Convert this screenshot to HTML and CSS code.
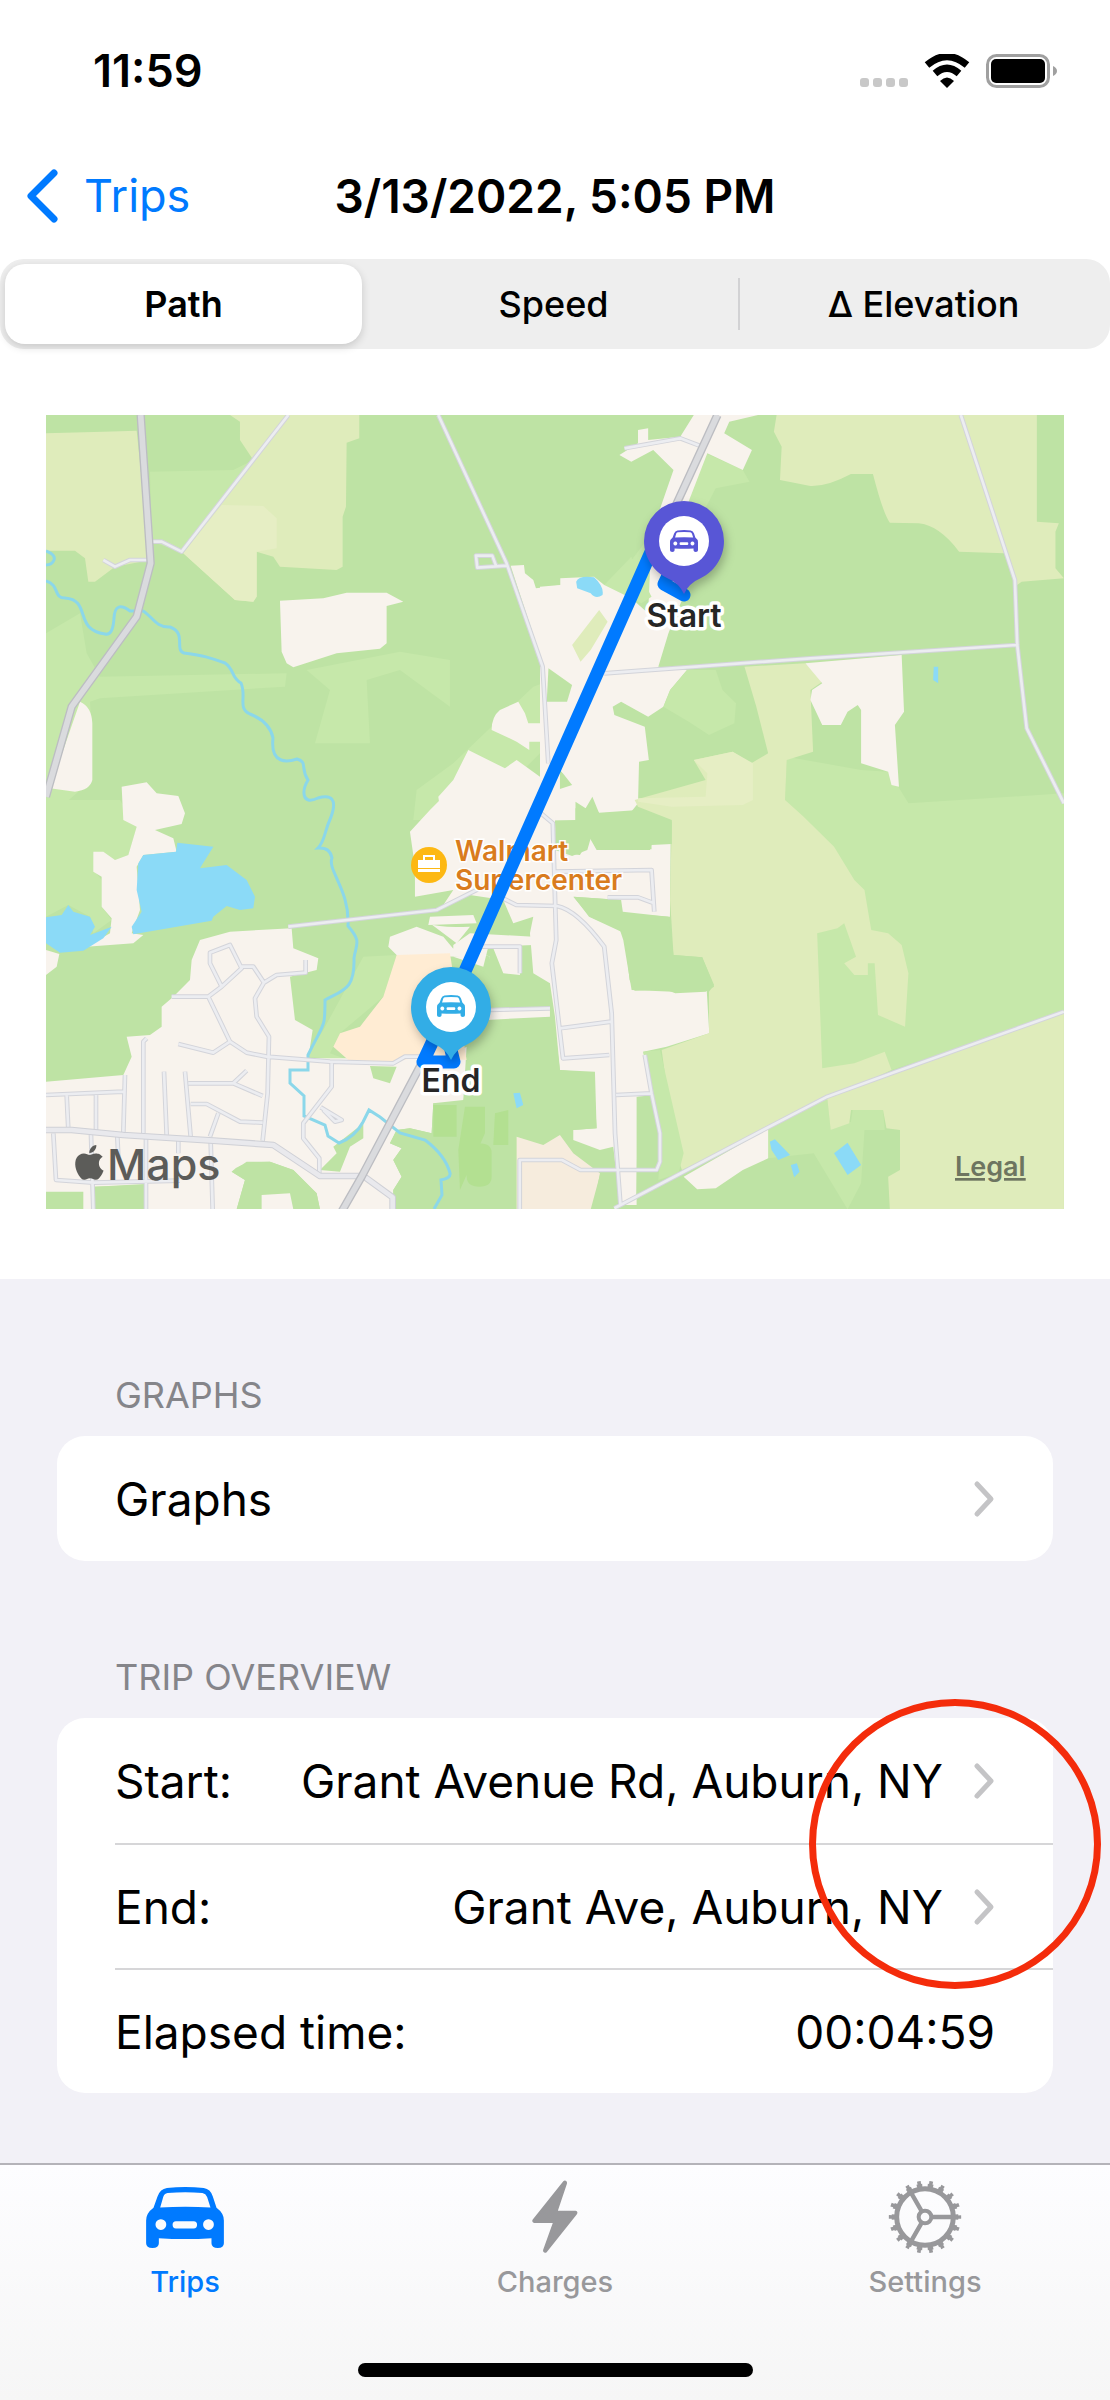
FILE: index.html
```html
<!DOCTYPE html>
<html lang="en">
<head>
<meta charset="utf-8">
<meta name="viewport" content="width=device-width, initial-scale=1">
<title>Trip details</title>
<link rel="stylesheet" href="styles.css">
</head>
<body>
<svg class="sprite" aria-hidden="true">
  <symbol id="car" viewBox="48 50 232 182">
    <path fill-rule="evenodd" d="M110 53Q165 47 220 53 240 56 247 78L258 112Q280 128 280 150V218Q280 232 262 232 243 232 243 218V203Q165 208 86 203V218Q86 232 67 232 48 232 48 218V150Q48 128 70 112L82 78Q90 56 110 53ZM112 68Q102 70 99 80L90 111Q165 107 240 111L230 80Q226 70 216 68 165 63 112 68ZM92 146a16 16 0 1 0 .1 0ZM234 146a16 16 0 1 0 .1 0ZM137 152a10 11 0 0 0 0 22H190a10 11 0 0 0 0-22Z"/>
  </symbol>
  <symbol id="chevron" viewBox="0 0 22 38">
    <path d="M4 4L18 19 4 34" fill="none" stroke="currentColor" stroke-width="5" stroke-linecap="round" stroke-linejoin="round"/>
  </symbol>
</svg>

<div class="screen">
  <header class="top">
    <div class="status">
      <time class="clock">11:59</time>
      <div class="status-icons">
        <svg class="signal" viewBox="0 0 50 10" fill="#c8c8c8"><rect width="9" height="9" rx="3"/><rect x="13" width="9" height="9" rx="3"/><rect x="26" width="9" height="9" rx="3"/><rect x="39" width="9" height="9" rx="3"/></svg>
        <svg class="wifi" viewBox="0 0 46 34"><path d="M3 11Q23-6 43 11" fill="none" stroke="#000" stroke-width="7"/><path d="M11 19.500Q23 9 35 19.500" fill="none" stroke="#000" stroke-width="7"/><path d="M16 27Q23 20 30 27L23 34Z"/></svg>
        <svg class="battery" viewBox="0 0 72 34"><rect x="1.500" y="1.500" width="61" height="31" rx="9" fill="none" stroke="#a0a0a0" stroke-width="3"/><rect x="5" y="5" width="54" height="24" rx="5"/><path d="M67 12Q71 14 71 17T67 22Z" fill="#a0a0a0"/></svg>
      </div>
    </div>
    <nav class="navbar">
      <a class="back" href="#trips">
        <svg class="back-icon" viewBox="0 0 32 54"><path d="M28 4L5 27 28 50" fill="none" stroke="currentColor" stroke-width="7" stroke-linecap="round" stroke-linejoin="round"/></svg>
        Trips
      </a>
      <h1 class="title">3/13/2022, 5:05 PM</h1>
    </nav>
    <div class="segments" role="group" aria-label="Map view">
      <button class="segment selected" type="button" aria-pressed="true">Path</button>
      <button class="segment" type="button" aria-pressed="false">Speed</button>
      <button class="segment divided" type="button" aria-pressed="false">Δ Elevation</button>
    </div>
  </header>

  <div class="map-area">
    <svg class="map" viewBox="46 415 1018 794" aria-label="Trip path map">
      <defs>
        <g id="highways">
          <g transform="translate(40 400) scale(.3333)"><path d="M302 45L332 490 290 650 95 920 18 1190"/></g>
          <g transform="translate(540 400) scale(.338 .3333)"><path d="M525 45L400 320 330 460"/></g>
          <g transform="translate(40 800) scale(.3333)"><path d="M1145 790L965 1130 905 1235"/></g>
        </g>
        <g id="avenues">
          <g transform="translate(40 800) scale(.3333)"><path d="M18 990L95 990 250 1005 520 1022 700 1035 840 1128H970L1058 1192V1235"/></g>
        </g>
        <g id="streets">
          <g transform="translate(40 400) scale(.3333)"><path d="M745 45L425 455 365 425H335M190 480L225 500 270 480H325M1195 45L1400 490 1508 800 1525 1090M1400 497L1312 503 1308 467H1357L1368 497"/></g>
          <g transform="translate(540 400) scale(.338 .3333)"><path d="M250 145L415 115 480 140M1245 45L1405 540 1412 735 1440 985 1550 1210M1410 735L800 775 190 820"/></g>
          <g transform="translate(40 800) scale(.3333)"><path d="M745 380L1190 330 1330 260M395 590H505L545 560 605 505 570 435 510 458V490L545 560M605 500H640L672 548 645 595 650 650 687 710 683 880 668 1022M672 548L710 525 797 518V480M505 590L570 725 520 758 415 732M570 725L620 758 680 770 870 785 1060 790 1095 770H1140M875 785V860L790 970V1015L838 1075V1125M842 922L905 960 885 965 850 930M445 850H580L668 888M580 850L620 812M452 912H500L600 965 668 968M535 940L510 1010M435 815L452 1010M372 815L380 1005M320 715L310 725V1000M18 885L250 875M255 825L250 1000M80 885L85 990M168 885V990M40 1000L48 1140 160 1148 420 1142M153 1005L160 1228M232 1010L235 1070M318 1015V1228M415 1022V1060M512 1022L518 1228"/></g>
          <g transform="translate(540 800) scale(.338 .3333)"><path d="M-20 20L38 70 48 420 35 490 68 775 205 765M-140 280L-70 315 50 318Q110 330 190 440L212 640 222 1000 238 1215M60 685L210 665M225 885L330 880 355 1000V1085L345 1110H120L65 1080H-60V1230M310 765L330 880M45 215L330 210 338 335M200 292H290L338 310M220 1225L660 990 850 890 1040 820 1550 635"/></g>
          <g transform="translate(40 800) scale(.3333)"><path d="M1350 630L1530 625M1290 440H1440V520"/></g>
        </g>
      </defs>

      <rect class="wood" x="46" y="415" width="1018" height="794"/>

      <!-- north-west -->
      <g transform="translate(40 400) scale(.3333)">
        <path class="grass" d="M330 215L580 210 640 180 540 310 425 455 335 425ZM18 700L120 640 140 760 180 830 740 820 735 860 180 895 150 905Q155 960 155 1140L18 1260ZM800 810L1080 755 1230 780V920L1080 810 980 840 990 1030 825 1030 870 870ZM1560 830L1480 860 1240 1090 1130 1170 1120 1260H1300L1560 1000Z"/>
        <path class="field" d="M18 100L190 95 290 92 330 480 225 500 165 545H145L135 475 105 452H18ZM570 45H958V115L920 128 918 320 908 350V500L890 510 720 500 700 470 650 455V590L640 605 585 600 430 460 640 180 600 120V65Z"/>
        <path class="field-light" d="M545 315L670 318 710 355V445L650 455V590L640 605 585 600 430 460Z"/>
        <path class="land" d="M720 602L850 595 920 578H1040L1090 605 1040 618V730L1020 746 890 760 760 802 740 790 725 755ZM120 905Q155 920 157 970V1140Q150 1170 105 1175L30 1165ZM1412 497L1452 495 1455 520 1480 540 1488 565 1570 555V830L1510 795ZM1435 905L1455 940 1465 970 1510 970V1025H1468V1050L1430 1025 1355 990Q1355 950 1380 930ZM1520 908H1570V1120L1530 1080ZM1285 1050L1395 1105 1430 1080 1500 1130 1560 1100V1260H1150L1200 1225 1195 1190 1240 1140Z"/>
      </g>

      <!-- north-east -->
      <g transform="translate(540 400) scale(.338 .3333)">
        <path class="grass" d="M490 160L600 210 620 245 520 265 440 420 400 330ZM330 400L220 550 330 580Z"/>
        <path class="land" d="M455 45H645L560 65 545 100 627 150 600 210 495 160 430 330 420 600 380 700 350 800 435 810 385 870 365 920 320 950 240 905 215 920 220 945 310 980 322 1080 293 1085 290 1210 270 1235 175 1240 155 1190 135 1225 105 1205 105 1262H45L50 1170 95 1155 60 1110 0 1180V560L60 555 60 535 160 530 190 555 220 550 320 640 330 400 395 210 335 150 270 185 235 165 290 130V90L320 85V120L415 110Z"/>
        <path class="grass" d="M190 555L270 470 330 590 300 610ZM435 810L520 810 540 870 580 910 575 970 500 1005 440 965 365 920 385 870Z"/>
        <path class="wood" d="M25 805L95 855 80 905 20 905Z"/>
        <path class="field" d="M175 630L200 665 150 750 120 785 95 735ZM700 45H1470V365L1535 370 1525 395V505L1550 535 1425 545 1405 560 1375 460 1240 455Q1180 375 1120 370L1035 368Q1015 340 985 222H920Q850 260 800 258L710 240 715 140 692 95Z"/>
        <path class="water" d="M107 545Q115 525 160 532 190 560 185 585 165 600 150 580L110 565ZM1165 800H1178V850L1163 840Z"/>
      </g>

      <!-- south-west -->
      <g transform="translate(40 800) scale(.3333)">
        <path class="grass" d="M18 0H240L290 80 265 165 225 180 160 155 165 215 185 240V320L215 360 160 400 150 350 85 315 18 350ZM800 770L850 690 970 470 1070 465 1030 590 900 700 870 760 925 780Z"/>
        <path class="land" d="M245-40L320-53 350-20 415-12 435 40 425 72 345 90 400 115 410 155 310 165 290 200 300 330 275 400 310 405 280 430 140 440 210 400 215 355 185 320V230L160 215V155L190 155 225 180 265 165 290 80 250 60ZM18 450L58 462 50 500 18 525ZM1110 95L1170 30 1200 0H1560L1545 65 1560 160 1620 165 1650 115 1670 150 1830 150 1835 132 1892 132 1890 350 1740 340V300L1600 290 1650 350 1740 390 1750 420 1775 570 1900 575 2000 565 2008 700 1880 740 1810 755 1840 890 1790 890V1215H1740L1720 1040 1680 1050 1600 1020V990L1670 985 1665 815 1560 810 1545 650 1530 550 1400 540 1340 520 1350 470 1250 430 1170 370 1200 330 1240 270 1125 290V200Z"/>
        <path class="land" d="M480 420L570 395 755 385 760 445 835 475 830 510 750 530 765 660 818 690 805 775H1140L1170 800 1280 740 1270 900 1180 910 1175 1000 1110 985 1070 990 1050 1030 1085 1045 1060 1080 1085 1130 1060 1170V1228H840L830 1180 760 1110 690 1085 620 1085 575 1115 615 1140 590 1228H320V1155L160 1160 165 1228H130V1175H18V845L250 825 275 770 260 710 330 705 365 680V620L400 590 450 540 455 480Z"/>
        <path class="wood" d="M1180 330L1290 285 1390 300 1420 370 1480 350 1470 400 1480 520 1530 550V620L1350 650 1330 520 1350 470 1250 430 1290 380Q1200 385 1165 370ZM1180 910H1270L1290 740 1340 700 1350 650H1540L1560 810 1660 820 1670 985 1600 990 1510 1035 1430 1010V1228H1060V1170L1085 1130 1060 1080 1085 1045 1050 1030 1070 990 1110 985 1175 1000ZM840 1110L890 1060 880 1040 970 970V1015L930 1040 900 1115ZM990 798L1070 800 1050 850 1000 835ZM165 1160L315 1152V1228H165ZM18 1178H128V1228H18ZM590 1228L615 1140 575 1115Q600 1085 690 1085L760 1110 830 1180 840 1228Z"/>
        <path class="land" d="M1050 410L1130 380 1210 410 1260 470 1070 465 1045 440ZM1170 350L1300 345 1310 370 1165 375ZM1240 435L1290 400 1480 410 1480 435 1345 440 1330 500 1240 470ZM1360 445H1440V525L1390 520ZM1340 635L1530 620V650L1340 660ZM665 1185L750 1180 760 1228H665Z"/>
        <path class="school" d="M1070 465L1230 460 1280 780 1140 770 1060 785 925 780 880 740 900 700 960 680 1030 590Z"/>
        <path class="sand" d="M1430 1010L1510 1035 1560 1005 1600 1060 1680 1120 1660 1228H1430Z"/>
        <path class="park" d="M1180 915H1250V1010H1180ZM1275 920H1335V1000L1260 1170 1255 1050ZM1365 940L1405 930V1035H1360ZM1280 1055Q1280 1030 1318 1030T1355 1060V1130Q1355 1160 1318 1160T1280 1130Z"/>
        <path class="water" d="M310 165L408 155 412 128 520 140 480 205 560 195 620 240 645 290 640 325 600 330 560 318 520 350 515 362 280 403 275 380 305 335 290 270 295 190ZM18 352L65 345 85 315 100 335 150 350 165 380 150 405 215 380 190 415 130 452 60 458 18 430ZM1420 880L1440 878 1450 915 1430 925Z"/>
      </g>

      <!-- south-east -->
      <g transform="translate(540 800) scale(.338 .3333)">
        <path class="grass" d="M725 0L730-130 950-90 1030-85 1060-40 1090 10 1550-20V640L1040 810 830 810 810 100Z"/>
        <path class="field" d="M605-400L785-410 835-355 800-330 808-145 730-120 725 0 780 50 870 140 930 240 960 270 980 390 1030 400 1070 435 1090 520 1080 680 1000 645 990 490 970 490V525H930L900 490 935 470 900 370 880 385 820 400 835 805 930 790 1020 755 1040 810 850 900 420 1110 400 1050 360 750 500 700 500 575 515 555 480 472 395 465 385 300 390 60 290 20 280 0 490-60 455-120 570-145 625-110 675-140 640-280Z"/>
        <path class="field-light" d="M455-120L570-145 630-110 630 0 600 15 390 20 290 5V-5L490-10 495-80Z"/>
        <path class="land" d="M785-410L1070-435 1077-265 1050-225 1062-40 1040-45 1030-85 950-110V-270L940-285 910-265 890-225H835L800-300 805-330 835-350Z"/>
        <path class="wood" d="M45 62L105 60V25H160L175 38 290 30 390 65V132L330 135V148L170 150 150 115 140 150 95 168 45 150ZM100 290L240 300 245 335 380 350 395 465 480 472 515 560 490 575 400 580 370 568 280 572 265 540 250 400 145 350ZM290 890L330 885 355 1000V1100L300 1180 285 1190ZM180 1115H215V1228H150ZM290 1190L420 1130 470 1168 520 1160 680 1075 670 990 1000 930 1030 990 1065 990V1110L1035 1150V1228H300Z"/>
        <path class="grass" d="M305 755L355 750 425 1060 410 1120 350 1140 360 1010ZM675 1075V985L850 895 860 990 920 965 925 930 1015 930 1020 990H960L950 1150 910 1228 810 1060Z"/>
        <path class="field" d="M850 895L1040 815 1550 635V1228H1035L1030 1130 1065 1110V990L1025 985 1015 930 920 930 915 970 860 990Z"/>
        <path class="land" d="M425 1130L675 985V1075L600 1110 520 1165 465 1168Z"/>
        <path class="water" d="M680 1025L695 1018 740 1065 705 1080 685 1050ZM742 1095L760 1090 768 1115 752 1132ZM870 1060L910 1028 950 1095 910 1125Z"/>
      </g>

      <path class="river" d="M46 551Q56 555 54 560T46 565M46 581C60 585 53 598 65 598C92 600 73 630 105 634Q113 636 114 618T130 611H143C152 616 156 628 170 627C187 633 174 650 184 653C205 656 208 657 225 663C235 670 231 678 241 683C247 697 237 708 250 714Q270 722 273 738C270 765 288 762 297 759C308 762 300 768 308 780C302 790 301 806 318 798Q340 792 331 817C324 832 325 841 318 848Q330 847 332 858C327 870 350 890 348 926C362 942 356 944 354 958C355 990 343 990 325 1000C325 1030 324 1022 308 1055V1070H290V1083L304 1096V1116L325 1125 328 1136 339 1143Q355 1137 363 1122L369 1110 380 1117 400 1133 425 1140Q445 1155 450 1173 451 1178 441 1180L442 1195 434 1209"/>

      <use href="#streets" class="road" stroke="#d3d4da" stroke-width="14"/>
      <use href="#streets" class="road" stroke="#ecedf1" stroke-width="8"/>
      <use href="#avenues" class="road" stroke="#cfd0d6" stroke-width="20"/>
      <use href="#avenues" class="road" stroke="#e9e9ed" stroke-width="14"/>
      <use href="#highways" class="road" stroke="#bcbdc2" stroke-width="25"/>
      <use href="#highways" class="road" stroke="#dadbde" stroke-width="17"/>

      <g class="place">
        <circle cx="429" cy="865" r="18" fill="#fdb813"/>
        <path d="M418 860H440V868H418ZM418 869H440V872H418Z" fill="#fff"/>
        <path d="M424 860V856H434V860" fill="none" stroke="#fff" stroke-width="2"/>
        <text><tspan x="455" y="861">Walmart</tspan><tspan x="455" y="890">Supercenter</tspan></text>
      </g>

      <path class="route" d="M684 595L664 584 690 530 655 543 458 987 423 1062H454L451 1050"/>

      <g fill="#5856d6">
        <path class="pin" d="M684 501A40 40 0 0 1 724 541C724 559 713 572 701 578Q689 583 684 594 679 583 667 578C655 572 644 559 644 541A40 40 0 0 1 684 501Z"/>
        <circle cx="684" cy="541" r="25" fill="#fff"/>
        <use href="#car" x="670" y="530" width="28" height="22"/>
      </g>
      <g fill="#32ade6">
        <path class="pin" d="M451 967A40 40 0 0 1 491 1007C491 1025 480 1038 468 1044Q456 1049 451 1060 446 1049 434 1044C422 1038 411 1025 411 1007A40 40 0 0 1 451 967Z"/>
        <circle cx="451" cy="1007" r="25" fill="#fff"/>
        <use href="#car" x="437" y="995" width="28" height="22"/>
      </g>
      <text class="pin-label" x="684" y="627">Start</text>
      <text class="pin-label" x="451" y="1092">End</text>

      <path class="ink" transform="translate(72 1145) scale(1.450)" d="M12.152 6.896c-.948 0-2.415-1.078-3.96-1.04-2.04.027-3.91 1.183-4.961 3.014-2.117 3.675-.546 9.103 1.519 12.09 1.013 1.454 2.208 3.09 3.792 3.039 1.52-.065 2.09-.987 3.935-.987 1.831 0 2.35.987 3.96.948 1.637-.026 2.676-1.48 3.676-2.948 1.156-1.688 1.636-3.325 1.662-3.415-.039-.013-3.182-1.221-3.22-4.857-.026-3.04 2.48-4.494 2.597-4.559-1.429-2.09-3.623-2.324-4.39-2.376-2-.156-3.675 1.09-4.61 1.09zM15.53 3.83c.843-1.012 1.4-2.427 1.245-3.83-1.207.052-2.662.805-3.532 1.818-.78.896-1.454 2.338-1.273 3.714 1.338.104 2.715-.688 3.559-1.701"/>
      <text class="ink brand" x="107" y="1180">Maps</text>
      <a href="#legal"><text class="legal" x="955" y="1176">Legal</text></a>
    </svg>
  </div>

  <main class="details">
    <section class="group">
      <h2 class="group-title">Graphs</h2>
      <ul class="card">
        <li><a class="row" href="#graphs"><span class="label">Graphs</span><svg class="chevron"><use href="#chevron"/></svg></a></li>
      </ul>
    </section>
    <section class="group">
      <h2 class="group-title">Trip Overview</h2>
      <ul class="card">
        <li><a class="row" href="#start"><span class="label">Start:</span><span>Grant Avenue Rd, Auburn, NY</span><svg class="chevron"><use href="#chevron"/></svg></a></li>
        <li><a class="row" href="#end"><span class="label">End:</span><span>Grant Ave, Auburn, NY</span><svg class="chevron"><use href="#chevron"/></svg></a></li>
        <li><div class="row"><span class="label">Elapsed time:</span><span>00:04:59</span></div></li>
      </ul>
      <div class="highlight" aria-hidden="true"></div>
    </section>
  </main>

  <footer class="tabbar">
    <nav class="tabs">
      <a class="tab active" href="#trips">
        <svg class="tab-icon" viewBox="0 0 78 74" fill="currentColor"><use href="#car" y="7" width="78" height="61"/></svg>
        Trips
      </a>
      <a class="tab" href="#charges">
        <svg class="tab-icon" viewBox="-17 59 234 222" fill="currentColor" stroke="currentColor" stroke-width="8" stroke-linejoin="round"><path d="M128 65Q133 64 132 69L103 155H161Q165 156 162 160L73 272Q68 275 68 270L99 184H38Q34 183 37 179Z"/></svg>
        Charges
      </a>
      <a class="tab" href="#settings">
        <svg class="tab-icon" viewBox="-117 -111 234 222" fill="none" stroke="currentColor">
          <circle r="85" stroke-width="15"/>
          <circle r="95" stroke-width="10" pathLength="360" stroke-dasharray="10 10" stroke-dashoffset="5"/>
          <circle r="103" stroke-width="11" pathLength="360" stroke-dasharray="6 14" stroke-dashoffset="3"/>
          <circle r="19" stroke-width="12"/>
          <path d="M22 0H82M-11-19L-42-73M-11 19L-42 73" stroke-width="13"/>
        </svg>
        Settings
      </a>
    </nav>
    <div class="home-indicator"></div>
  </footer>
</div>
</body>
</html>
```
FILE: styles.css
```css
* {
  box-sizing: border-box;
}

body {
  margin: 0;
  background: #fff;
  color: #000;
  font-family: Inter, "Liberation Sans", sans-serif;
}

a {
  color: inherit;
  text-decoration: none;
}

.sprite {
  position: absolute;
  width: 0;
  height: 0;
}

.screen {
  display: flex;
  flex-direction: column;
  min-height: 100vh;
}

/* Status bar */
.status {
  display: flex;
  justify-content: space-between;
  align-items: center;
  padding: 44px 52px 0 93px;
}

.clock {
  font-size: 45px;
  font-weight: 600;
  line-height: 54px;
}

.status-icons {
  display: flex;
  align-items: flex-end;
}

.signal {
  width: 50px;
  height: 10px;
}

.wifi {
  width: 46px;
  height: 34px;
  margin: 0 16px 0 14px;
}

.battery {
  width: 72px;
  height: 34px;
}

/* Navigation bar */
.navbar {
  display: grid;
  grid-template-columns: 1fr auto 1fr;
  align-items: center;
  padding: 66px 26px 31px;
}

.back {
  display: flex;
  align-items: center;
  gap: 26px;
  color: #007aff;
  font-size: 45px;
  line-height: 64px;
}

.back-icon {
  width: 32px;
  height: 54px;
}

.title {
  margin: 0;
  font-size: 46px;
  font-weight: 600;
  line-height: 64px;
}

/* Segmented control */
.segments {
  display: grid;
  grid-template-columns: repeat(3, 1fr);
  height: 90px;
  padding: 5px 0;
  border-radius: 24px;
  background: #eee;
}

.segment {
  position: relative;
  margin: 0 8px 0 5px;
  padding: 0;
  border: 0;
  border-radius: 20px;
  background: none;
  color: #000;
  font: 500 36px/80px Inter, "Liberation Sans", sans-serif;
}

.segment.selected {
  background: #fff;
  box-shadow: 0 3px 8px rgba(0, 0, 0, .16);
  font-weight: 600;
}

.segment.divided::before {
  content: "";
  position: absolute;
  top: 14px;
  bottom: 14px;
  left: -7px;
  width: 2px;
  background: #d2d2d4;
}

/* Map */
.map-area {
  padding: 66px 46px 70px;
}

.map {
  display: block;
  width: 100%;
}

.wood { fill: #bee3a4; }
.grass { fill: #c6e8aa; }
.park { fill: #b3e091; }
.field { fill: #dfecbb; }
.field-light { fill: #e6eec4; }
.land { fill: #f8f3ed; }
.school { fill: #ffecd3; }
.sand { fill: #f6ecdd; }
.water { fill: #8bdaf7; }

.river {
  fill: none;
  stroke: #8bd7ea;
  stroke-width: 3;
}

.road {
  fill: none;
  stroke-linejoin: round;
}

.place text {
  fill: #d97c1e;
  stroke: #fff;
  stroke-width: 3px;
  paint-order: stroke;
  font-size: 28px;
  font-weight: 600;
}

.route {
  fill: none;
  stroke: #007aff;
  stroke-width: 13;
  stroke-linecap: round;
  stroke-linejoin: round;
}

.pin {
  filter: drop-shadow(2px 5px 5px rgba(0, 0, 0, .25));
}

.pin-label {
  fill: #262626;
  stroke: #fff;
  stroke-width: 7px;
  stroke-linejoin: round;
  paint-order: stroke;
  font-size: 32px;
  font-weight: 600;
  text-anchor: middle;
}

.ink {
  fill: #5c5c59;
}

.brand {
  font-size: 43px;
  font-weight: 500;
}

.legal {
  fill: #6d7560;
  font-size: 27px;
  font-weight: 600;
  text-decoration: underline;
}

/* Grouped list */
.details {
  flex: 1;
  display: flex;
  flex-direction: column;
  gap: 92px;
  padding: 92px 57px 70px;
  background: #f2f1f7;
}

.group {
  position: relative;
}

.group-title {
  margin: 0 58px 17px;
  color: #85858a;
  font-size: 36px;
  font-weight: 400;
  line-height: 48px;
  text-transform: uppercase;
}

.card {
  margin: 0;
  padding: 0;
  overflow: hidden;
  border-radius: 28px;
  background: #fff;
  list-style: none;
}

.row {
  display: flex;
  align-items: center;
  gap: 30px;
  height: 125px;
  margin-left: 58px;
  padding-right: 58px;
  font-size: 46px;
}

.label {
  margin-right: auto;
}

li + li .row {
  border-top: 2px solid #d6d6d8;
}

.chevron {
  width: 22px;
  height: 38px;
  color: #c4c4c6;
}

.highlight {
  position: absolute;
  top: 46px;
  right: -48px;
  width: 292px;
  height: 290px;
  border: 7px solid #f42c0b;
  border-radius: 50%;
  pointer-events: none;
}

/* Tab bar */
.tabbar {
  border-top: 2px solid #b4b3b9;
  background: linear-gradient(#fdfdff, #f6f6f6);
}

.tabs {
  display: grid;
  grid-template-columns: repeat(3, 1fr);
  padding-top: 15px;
}

.tab {
  display: flex;
  flex-direction: column;
  align-items: center;
  gap: 10px;
  color: #98989b;
  font-size: 29px;
  font-weight: 500;
  line-height: 36px;
}

.tab.active {
  color: #007aff;
}

.tab-icon {
  width: 78px;
  height: 74px;
}

.home-indicator {
  width: 395px;
  height: 14px;
  margin: 63px auto 23px;
  border-radius: 7px;
  background: #000;
}
```
